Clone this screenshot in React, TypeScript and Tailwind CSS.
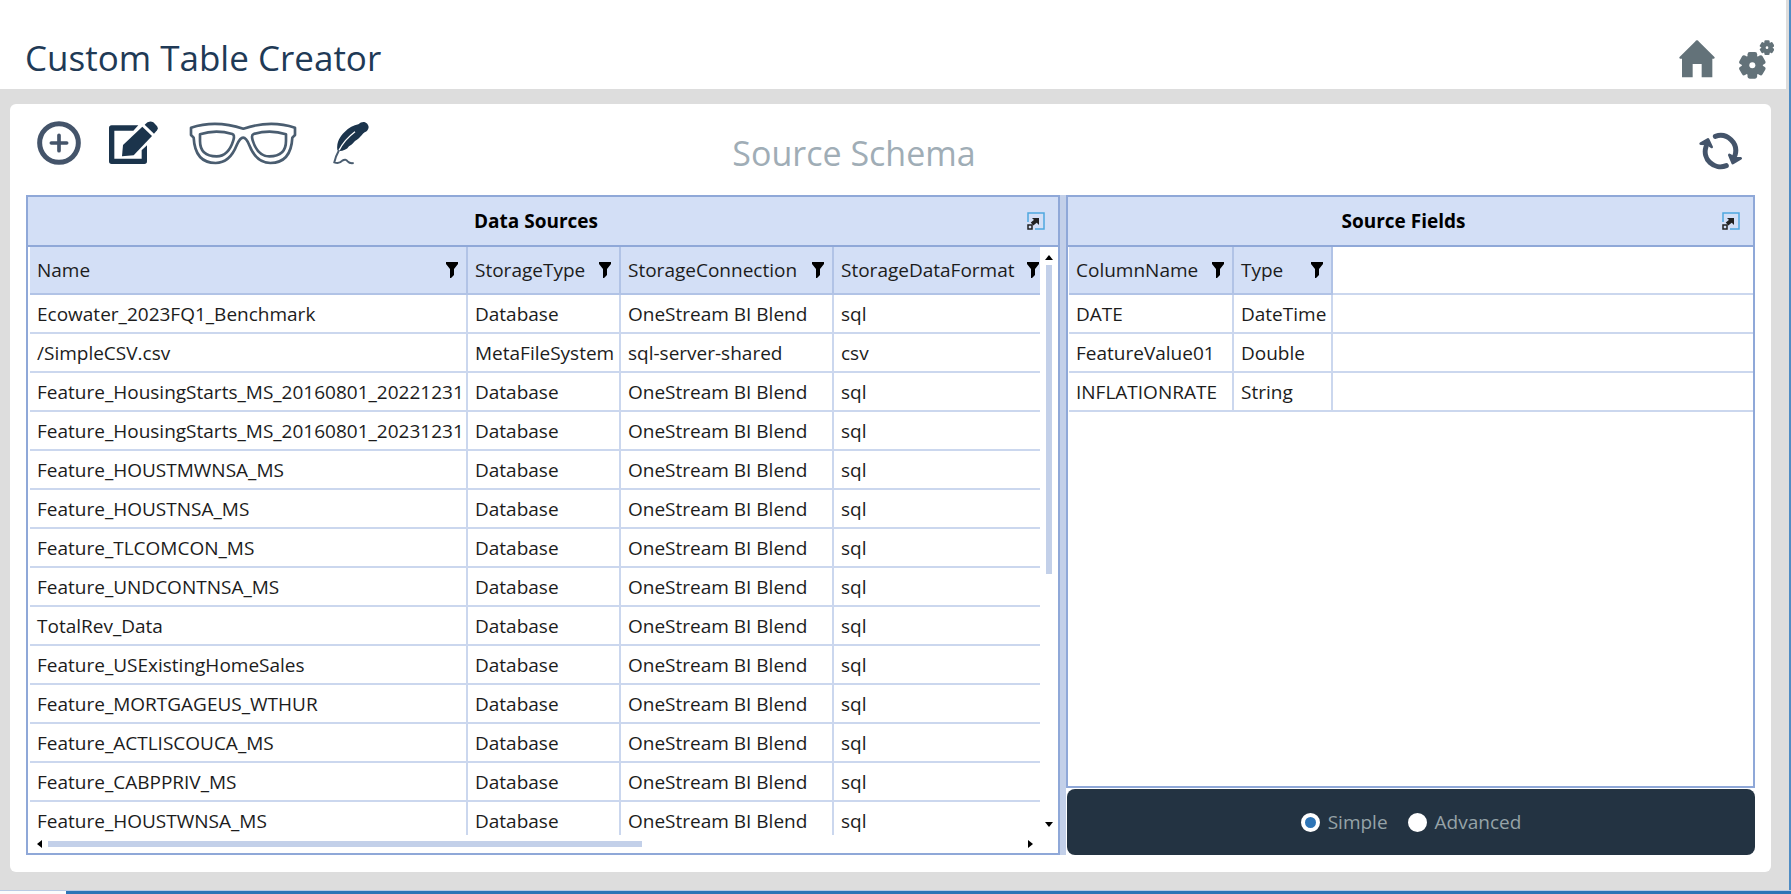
import type { ReactNode } from "react"

const sources = [
  ["Ecowater_2023FQ1_Benchmark", "Database", "OneStream BI Blend", "sql"],
  ["/SimpleCSV.csv", "MetaFileSystem", "sql-server-shared", "csv"],
  ["Feature_HousingStarts_MS_20160801_20221231", "Database", "OneStream BI Blend", "sql"],
  ["Feature_HousingStarts_MS_20160801_20231231", "Database", "OneStream BI Blend", "sql"],
  ["Feature_HOUSTMWNSA_MS", "Database", "OneStream BI Blend", "sql"],
  ["Feature_HOUSTNSA_MS", "Database", "OneStream BI Blend", "sql"],
  ["Feature_TLCOMCON_MS", "Database", "OneStream BI Blend", "sql"],
  ["Feature_UNDCONTNSA_MS", "Database", "OneStream BI Blend", "sql"],
  ["TotalRev_Data", "Database", "OneStream BI Blend", "sql"],
  ["Feature_USExistingHomeSales", "Database", "OneStream BI Blend", "sql"],
  ["Feature_MORTGAGEUS_WTHUR", "Database", "OneStream BI Blend", "sql"],
  ["Feature_ACTLISCOUCA_MS", "Database", "OneStream BI Blend", "sql"],
  ["Feature_CABPPRIV_MS", "Database", "OneStream BI Blend", "sql"],
  ["Feature_HOUSTWNSA_MS", "Database", "OneStream BI Blend", "sql"],
]

const fields = [
  ["DATE", "DateTime"],
  ["FeatureValue01", "Double"],
  ["INFLATIONRATE", "String"],
]

function HomeIcon() {
  return (
    <svg viewBox="0 0 108 114" className="h-[38px] w-9" fill="#637279">
      <path d="M54 1 Q57 1 60 5 L107 52 Q108 56 104 56 H100 V112 H68 V72 H41 V112 H9 V56 H4 Q0 56 1 52 L48 5 Q51 1 54 1 Z" />
    </svg>
  )
}

function Gear({ x, y, r, hole }: { x: number; y: number; r: number; hole: number }) {
  return (
    <g transform={`translate(${x} ${y})`}>
      {[0, 60, 120].map((angle) => (
        <rect
          key={angle}
          x={-r * 0.36}
          y={-r}
          width={r * 0.72}
          height={r * 2}
          rx={r * 0.16}
          transform={`rotate(${angle})`}
          fill="#637279"
        />
      ))}
      <circle r={r * 0.78} fill="#637279" />
      <circle r={hole} fill="white" />
    </g>
  )
}

function GearsIcon() {
  return (
    <svg viewBox="0 0 105 117" className="h-[39px] w-[35px]">
      <Gear x={40} y={76} r={40} hole={9} />
      <Gear x={84} y={23} r={22} hole={4} />
    </svg>
  )
}

function AddIcon() {
  return (
    <svg viewBox="0 0 132 132" className="size-11" fill="none" stroke="#44546a" strokeLinecap="round">
      <circle cx="66" cy="66" r="58" strokeWidth="15" />
      <path d="M66 43V89M43 66H89" strokeWidth="11" />
    </svg>
  )
}

function EditIcon() {
  return (
    <svg viewBox="0 0 150 132" className="h-11 w-[50px]" fill="#1b344c">
      <path d="M11 13H91L76 29H19V113H101V88L117 73V121Q117 129 109 129H11Q3 129 3 121V21Q3 13 11 13Z" />
      <path d="M42 106L45 72L103 17L132 45L77 103Z" />
      <path d="M110 11Q123 -4 136 4L146 14Q152 21 147 28L138 38Z" />
    </svg>
  )
}

function GlassesIcon() {
  return (
    <svg viewBox="0 0 324 132" className="h-11 w-[108px]" fill="none" stroke="#4a5d70" strokeWidth="8" strokeLinejoin="round">
      <path d="M163 23Q80 -4 6 20V42L14 50Q18 126 80 126Q122 126 143 73Q163 27 181 73Q202 126 244 126Q306 126 310 50L318 42V20Q244 -4 163 23Z" />
      <path d="M33 40Q80 24 130 39Q138 42 133 58Q118 106 83 106Q33 106 33 60Z" />
      <path d="M291 40Q244 24 194 39Q186 42 191 58Q206 106 241 106Q291 106 291 60Z" />
    </svg>
  )
}

function QuillIcon() {
  return (
    <svg viewBox="0 0 108 132" className="h-11 w-9">
      <path
        d="M13 88C10 62 22 46 34 34C48 20 62 12 76 10Q84 2 94 3Q105 6 107 18Q106 30 95 34C84 42 80 54 66 60C60 68 52 74 48 76C42 86 30 90 20 90Z"
        fill="#1b344c"
      />
      <path d="M66 32Q34 56 18 88" fill="none" stroke="white" strokeWidth="4" />
      <path d="M18 88Q8 106 4 124Q18 130 28 119Q38 112 44 121Q50 128 62 126" fill="none" stroke="#4a5d70" strokeWidth="6" />
    </svg>
  )
}

function RefreshIcon() {
  return (
    <svg viewBox="0 0 132 114" className="h-[38px] w-11" fill="none" stroke="#44546a" strokeLinecap="round">
      <path d="M49 13A46 46 0 0 1 108 70M82 101A46 46 0 0 1 21 44" strokeWidth="15" />
      <path d="M5 35L27 22L38 45L24 36ZM91 69L101 93L125 79L108 78Z" fill="#44546a" strokeWidth="8" strokeLinejoin="round" />
    </svg>
  )
}

function FilterIcon() {
  return (
    <svg viewBox="0 0 12 16" className="h-4 w-3" fill="black">
      <path d="M0 0H12V2L8 7V13L5 16H4V7L0 2Z" />
    </svg>
  )
}

function ExpandIcon() {
  return (
    <svg viewBox="0 0 18 18" className="size-[18px]" fill="none">
      <path d="M1 10V1H17V17H8" stroke="#4fa8df" strokeWidth="1.5" />
      <rect x="1" y="13" width="4" height="4" stroke="#222" strokeWidth="1.5" />
      <path d="M5 12L10 8" stroke="#222" strokeWidth="4" />
      <path d="M5 6H12V13Z" fill="#222" />
    </svg>
  )
}

function Arrow({ path }: { path: string }) {
  return (
    <svg viewBox="0 0 8 8" className="size-2 shrink-0" fill="black">
      <path d={path} />
    </svg>
  )
}

function PanelHeader({ title }: { title: string }) {
  return (
    <header className="flex h-[50px] shrink-0 items-center border-b-2 border-[#8fa8d8] bg-[#d3dff6] pr-[13px] pl-[17px]">
      <h3 className="flex-1 text-center text-[19px] leading-6 font-bold text-black">{title}</h3>
      <button type="button" aria-label={`Expand ${title}`}>
        <ExpandIcon />
      </button>
    </header>
  )
}

function HeadCell({ children }: { children: string }) {
  return (
    <th className="h-12 border-r-2 border-b-2 border-[#b1c3e6] bg-[#d3dff6] p-0 pr-2 pl-[7px] text-left font-normal">
      <div className="flex items-center justify-between">
        {children}
        <button type="button" aria-label={`Filter ${children}`}>
          <FilterIcon />
        </button>
      </div>
    </th>
  )
}

function Cell({ children }: { children?: ReactNode }) {
  return <td className="h-[39px] border-r-2 border-b-2 border-[#cbd7ee] p-0 pl-[7px]">{children}</td>
}

export default function App() {
  return (
    <div className="flex h-screen flex-col bg-[#ddd] font-['Open_Sans','Noto_Sans',sans-serif] text-[#1c1c1c]">
      <div className="flex min-h-0 flex-1 flex-col border-r-2 border-[#4f8cc4]">
        <header className="mr-[3px] flex h-[89px] shrink-0 items-center justify-between bg-white pt-[27px] pr-3 pl-[25px]">
          <h1 className="text-[35px] leading-[48px] text-[#1f3a56]">Custom Table Creator</h1>
          <nav className="flex items-center gap-6 pt-0.5">
            <button type="button" aria-label="Home">
              <HomeIcon />
            </button>
            <button type="button" aria-label="Settings">
              <GearsIcon />
            </button>
          </nav>
        </header>

        <main className="mt-[15px] mr-[18px] mb-[18px] ml-2.5 flex min-h-0 flex-1 flex-col rounded-md bg-white px-4 pb-[17px]">
          <div className="grid h-[91px] shrink-0 grid-cols-3">
            <div className="flex items-start pt-[17px] pl-[11px]">
              <button type="button" aria-label="Add" className="mr-[27px]">
                <AddIcon />
              </button>
              <button type="button" aria-label="Edit" className="mr-[31px]">
                <EditIcon />
              </button>
              <button type="button" aria-label="Preview" className="mr-9">
                <GlassesIcon />
              </button>
              <button type="button" aria-label="Write">
                <QuillIcon />
              </button>
            </div>
            <h2 className="pt-[25px] pr-[73px] text-center text-[34px] leading-[48px] text-[#a0adb6]">Source Schema</h2>
            <div className="flex items-start justify-end pt-7 pr-3">
              <button type="button" aria-label="Refresh">
                <RefreshIcon />
              </button>
            </div>
          </div>

          <div className="flex min-h-0 flex-1">
            <section className="flex min-w-0 flex-[1030] flex-col border-2 border-[#8fa8d8]">
              <PanelHeader title="Data Sources" />
              <div className="flex min-h-0 flex-1 pl-0.5">
                <div className="flex min-w-0 flex-1 flex-col">
                  <div className="min-h-0 flex-1 overflow-hidden">
                    <table className="w-[1019px] table-fixed border-separate border-spacing-0 text-[19px] leading-6">
                      <colgroup>
                        <col className="w-[438px]" />
                        <col className="w-[153px]" />
                        <col className="w-[213px]" />
                        <col />
                      </colgroup>
                      <thead>
                        <tr>
                          <HeadCell>Name</HeadCell>
                          <HeadCell>StorageType</HeadCell>
                          <HeadCell>StorageConnection</HeadCell>
                          <HeadCell>StorageDataFormat</HeadCell>
                        </tr>
                      </thead>
                      <tbody>
                        {sources.map((row) => (
                          <tr key={row[0]}>
                            {row.map((value, i) => (
                              <Cell key={i}>{value}</Cell>
                            ))}
                          </tr>
                        ))}
                      </tbody>
                    </table>
                  </div>
                  <div className="flex h-[18px] shrink-0 items-center px-1.5">
                    <Arrow path="M6 0V8L1 4Z" />
                    <div className="mx-1 flex-1">
                      <div className="h-1.5 w-[61%] bg-[#c3d0e9]" />
                    </div>
                    <Arrow path="M2 0V8L7 4Z" />
                  </div>
                </div>
                <div className="flex w-[18px] shrink-0 flex-col items-center pt-1.5 pb-6">
                  <Arrow path="M0 7H8L4 2Z" />
                  <div className="my-1 flex-1">
                    <div className="h-[56%] w-1.5 bg-[#c3d0e9]" />
                  </div>
                  <Arrow path="M0 1H8L4 6Z" />
                </div>
              </div>
            </section>

            <div className="w-1.5 shrink-0 bg-[#c3d0e9]" />

            <div className="flex min-w-0 flex-[689] flex-col gap-px">
              <section className="flex min-h-0 flex-1 flex-col border-2 border-[#8fa8d8]">
                <PanelHeader title="Source Fields" />
                <table className="ml-px table-fixed border-separate border-spacing-0 text-[19px] leading-6">
                  <colgroup>
                    <col className="w-[165px]" />
                    <col className="w-[99px]" />
                    <col />
                  </colgroup>
                  <thead>
                    <tr>
                      <HeadCell>ColumnName</HeadCell>
                      <HeadCell>Type</HeadCell>
                      <td className="border-b-2 border-[#cbd7ee]" />
                    </tr>
                  </thead>
                  <tbody>
                    {fields.map(([name, type]) => (
                      <tr key={name}>
                        <Cell>{name}</Cell>
                        <Cell>{type}</Cell>
                        <td className="border-b-2 border-[#cbd7ee]" />
                      </tr>
                    ))}
                  </tbody>
                </table>
              </section>
              <div className="ml-px flex h-[66px] shrink-0 items-center justify-center gap-5 rounded-lg bg-[#233342] text-[19px] leading-6 text-[#96a3a8]">
                <label className="flex items-center gap-2">
                  <input
                    type="radio"
                    name="mode"
                    defaultChecked
                    className="size-[19px] appearance-none rounded-full border-4 border-white bg-white checked:bg-[#2e75b6]"
                  />
                  Simple
                </label>
                <label className="flex items-center gap-2">
                  <input
                    type="radio"
                    name="mode"
                    className="size-[19px] appearance-none rounded-full border-4 border-white bg-white checked:bg-[#2e75b6]"
                  />
                  Advanced
                </label>
              </div>
            </div>
          </div>
        </main>
      </div>
      <footer className="flex h-1 shrink-0 border-t border-[#b9cae3] bg-[#2e75b6]">
        <div className="w-[66px] bg-[#fbfbfb]" />
      </footer>
    </div>
  )
}
